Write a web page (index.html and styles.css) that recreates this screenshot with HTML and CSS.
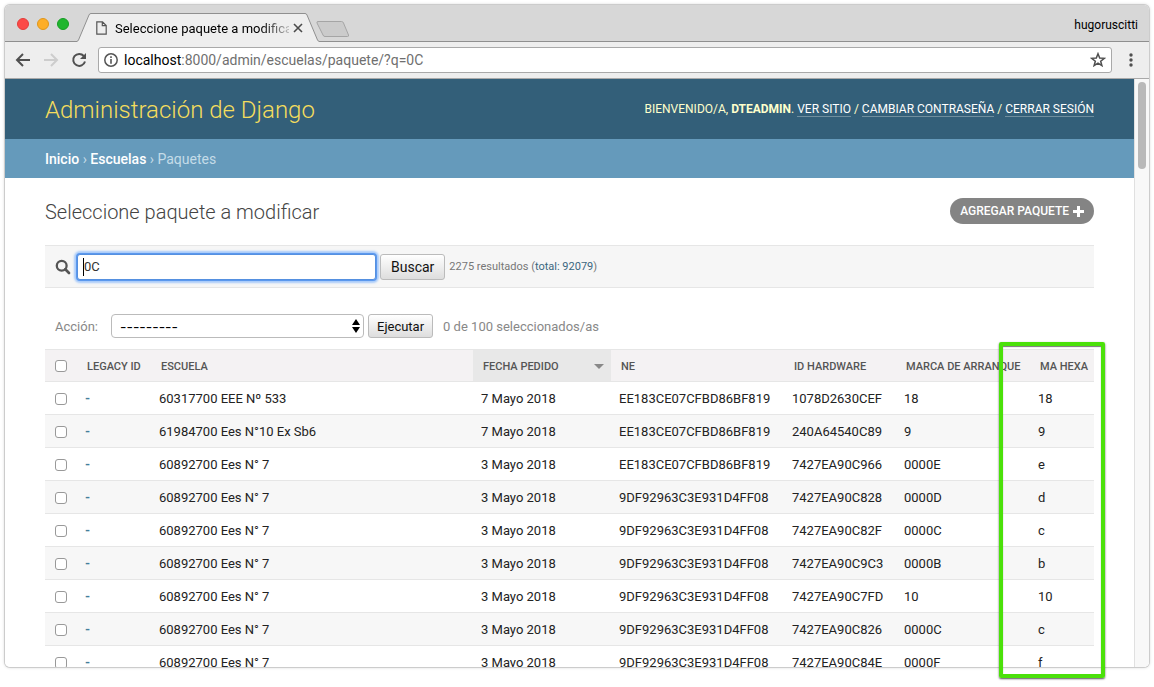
FILE: index.html
```html
<!DOCTYPE html>
<html lang="es">
<head>
<meta charset="utf-8">
<title>Seleccione paquete a modificar</title>
<link rel="stylesheet" href="styles.css">
</head>
<body>
<div class="window">
  <div class="tabstrip">
    <div class="lights"><i class="light close"></i><i class="light min"></i><i class="light max"></i></div>
    <div class="tab">
      <svg class="slope" width="14" height="29" viewBox="0 0 14 29"><path d="M0 29V28L1 28 12 2Q13 .5 14 .5V29Z" fill="#eee"/><path d="M0 28.500Q1 28 1.500 27L12 2Q12.500 .5 14 .5" fill="none" stroke="#8f8f8f"/></svg>
      <div class="tab-body">
        <svg width="11" height="14" viewBox="0 0 11 14" fill="none" stroke="#555" stroke-width="1.200"><path d="M.8.800H6.500L10.200 4.500V13.200H.8ZM6.300 1V4.700H10"/></svg>
        <span class="tab-title">Seleccione paquete a modificar</span>
        <button class="tab-close" type="button" aria-label="Cerrar pestaña"><svg width="10" height="10" viewBox="0 0 10 10" stroke="#4a4a4a" stroke-width="1.600"><path d="M1 1 9 9M9 1 1 9"/></svg></button>
      </div>
      <svg class="slope" width="14" height="29" viewBox="0 0 14 29"><path d="M0 .5Q1 .5 2 2L13 28H14V29H0Z" fill="#eee"/><path d="M0 .5Q1.500 .5 2 2L12.500 27Q13 28 14 28.500" fill="none" stroke="#8f8f8f"/></svg>
    </div>
    <button class="new-tab" type="button" aria-label="Nueva pestaña"><svg width="34" height="18" viewBox="0 0 34 18"><path d="M2 1.500H25.500Q27 1.500 27.500 3L32.500 15Q33 16.500 31.500 16.500H9Q7.500 16.500 7 15L1 3Q.5 1.500 2 1.500Z" fill="#cbcbcb" stroke="#a5a5a5"/></svg></button>
    <span class="profile">hugoruscitti</span>
  </div>
  <div class="toolbar">
    <button class="nav" type="button" aria-label="Atrás"><svg width="16" height="14" viewBox="0 0 16 14" fill="none" stroke="#505050" stroke-width="2"><path d="M15 7H2M8 1 2 7 8 13"/></svg></button>
    <button class="nav" type="button" aria-label="Adelante" disabled><svg width="16" height="14" viewBox="0 0 16 14" fill="none" stroke="#cdcdcd" stroke-width="2"><path d="M1 7H14M8 1 14 7 8 13"/></svg></button>
    <button class="nav" type="button" aria-label="Recargar"><svg width="16" height="16" viewBox="0 0 16 16"><path d="M12.800 4A6 6 0 1 0 14 9.500" fill="none" stroke="#505050" stroke-width="2"/><path d="M15 1V7H9Z" fill="#505050"/></svg></button>
    <div class="omnibox">
      <svg width="14" height="14" viewBox="0 0 14 14"><circle cx="7" cy="7" r="6.200" fill="none" stroke="#555" stroke-width="1.500"/><path d="M6.200 3.300H7.800V5H6.200ZM6.200 6H7.800V10.700H6.200Z" fill="#555"/></svg>
      <span class="url"><b>localhost</b>:8000/admin/escuelas/paquete/?q=0C</span>
      <button class="star" type="button" aria-label="Añadir a marcadores"><svg width="16" height="16" viewBox="0 0 16 16"><path d="M8 1.700 9.700 6 14.300 6.300 10.700 9.200 11.900 13.700 8 11.200 4.100 13.700 5.300 9.200 1.700 6.300 6.300 6Z" fill="none" stroke="#505050" stroke-width="1.500"/></svg></button>
    </div>
    <button class="menu" type="button" aria-label="Menú"><svg width="4" height="14" viewBox="0 0 4 14" fill="#505050"><circle cx="2" cy="2" r="1.700"/><circle cx="2" cy="7" r="1.700"/><circle cx="2" cy="12" r="1.700"/></svg></button>
  </div>
  <div class="viewport">
    <div class="page">
      <header class="header">
        <h1>Administración de Django</h1>
        <div class="user-tools">Bienvenido/a, <strong>dteadmin</strong>. <a href="#">Ver sitio</a> / <a href="#">Cambiar contraseña</a> / <a href="#">Cerrar sesión</a></div>
      </header>
      <nav class="breadcrumbs"><a href="#">Inicio</a> › <a href="#">Escuelas</a> › Paquetes</nav>
      <main class="content">
        <div class="heading">
          <h2>Seleccione paquete a modificar</h2>
          <a class="add" href="#">Agregar paquete <svg width="11" height="11" viewBox="0 0 11 11" fill="#fff"><path d="M4 0H7V4H11V7H7V11H4V7H0V4H4Z"/></svg></a>
        </div>
        <form class="search">
          <label for="q" aria-label="Buscar"><svg width="16" height="16" viewBox="0 0 16 16" fill="none" stroke="#555"><circle cx="6.700" cy="6.700" r="4.900" stroke-width="2.300"/><path d="M10.300 10.300 14 14" stroke-width="2.700" stroke-linecap="round"/></svg></label>
          <span class="field"><input id="q" type="text" value="0C"><i class="caret"></i></span>
          <button class="btn btn-search" type="button">Buscar</button>
          <span class="count">2275 resultados (<a href="#">total: 92079</a>)</span>
        </form>
        <form class="actions">
          <label for="action">Acción:</label>
          <span class="select"><select id="action"><option>---------</option></select><svg width="8" height="14" viewBox="0 0 8 14"><path d="M4 0 8 6H0ZM0 8H8L4 14Z"/></svg></span>
          <button class="btn" type="button">Ejecutar</button>
          <span class="selected">0 de 100 seleccionados/as</span>
        </form>
        <table class="results">
          <colgroup><col class="c-check"><col class="c-legacy"><col><col class="c-date"><col class="c-ne"><col class="c-hw"><col class="c-mark"><col class="c-hexa"></colgroup>
          <thead><tr><th><input type="checkbox" aria-label="Seleccionar todo"></th><th>Legacy id</th><th>Escuela</th><th class="sorted"><span>Fecha pedido<svg width="10" height="5" viewBox="0 0 10 5"><path d="M0 0H10L5 5Z" fill="#888"/></svg></span></th><th>Ne</th><th>Id hardware</th><th>Marca de arranque</th><th>Ma hexa</th></tr></thead>
          <tbody>
            <tr><td><input type="checkbox" aria-label="Seleccionar fila 1"></td><td><a href="#">-</a></td><td>60317700 EEE Nº 533</td><td>7 Mayo 2018</td><td>EE183CE07CFBD86BF819</td><td>1078D2630CEF</td><td>18</td><td>18</td></tr>
            <tr><td><input type="checkbox" aria-label="Seleccionar fila 2"></td><td><a href="#">-</a></td><td>61984700 Ees N°10 Ex Sb6</td><td>7 Mayo 2018</td><td>EE183CE07CFBD86BF819</td><td>240A64540C89</td><td>9</td><td>9</td></tr>
            <tr><td><input type="checkbox" aria-label="Seleccionar fila 3"></td><td><a href="#">-</a></td><td>60892700 Ees N° 7</td><td>3 Mayo 2018</td><td>EE183CE07CFBD86BF819</td><td>7427EA90C966</td><td>0000E</td><td>e</td></tr>
            <tr><td><input type="checkbox" aria-label="Seleccionar fila 4"></td><td><a href="#">-</a></td><td>60892700 Ees N° 7</td><td>3 Mayo 2018</td><td>9DF92963C3E931D4FF08</td><td>7427EA90C828</td><td>0000D</td><td>d</td></tr>
            <tr><td><input type="checkbox" aria-label="Seleccionar fila 5"></td><td><a href="#">-</a></td><td>60892700 Ees N° 7</td><td>3 Mayo 2018</td><td>9DF92963C3E931D4FF08</td><td>7427EA90C82F</td><td>0000C</td><td>c</td></tr>
            <tr><td><input type="checkbox" aria-label="Seleccionar fila 6"></td><td><a href="#">-</a></td><td>60892700 Ees N° 7</td><td>3 Mayo 2018</td><td>9DF92963C3E931D4FF08</td><td>7427EA90C9C3</td><td>0000B</td><td>b</td></tr>
            <tr><td><input type="checkbox" aria-label="Seleccionar fila 7"></td><td><a href="#">-</a></td><td>60892700 Ees N° 7</td><td>3 Mayo 2018</td><td>9DF92963C3E931D4FF08</td><td>7427EA90C7FD</td><td>10</td><td>10</td></tr>
            <tr><td><input type="checkbox" aria-label="Seleccionar fila 8"></td><td><a href="#">-</a></td><td>60892700 Ees N° 7</td><td>3 Mayo 2018</td><td>9DF92963C3E931D4FF08</td><td>7427EA90C826</td><td>0000C</td><td>c</td></tr>
            <tr><td><input type="checkbox" aria-label="Seleccionar fila 9"></td><td><a href="#">-</a></td><td>60892700 Ees N° 7</td><td>3 Mayo 2018</td><td>9DF92963C3E931D4FF08</td><td>7427EA90C84E</td><td>0000F</td><td>f</td></tr>
          </tbody>
        </table>
      </main>
    </div>
    <div class="scrollbar"><div class="thumb"></div></div>
  </div>
</div>
<div class="highlight"></div>
</body>
</html>
```

FILE: styles.css
```css
* { box-sizing: border-box; }
body {
  margin: 0;
  height: 100vh;
  padding: 5px 5px 20px;
  position: relative;
  overflow: hidden;
  background: #fff;
  font-family: Roboto, "Liberation Sans", sans-serif;
  font-size: 13px;
  color: #222;
}
button { font-family: inherit; cursor: pointer; }
svg { display: block; flex: none; }
h1, h2 { margin: 0; font-weight: 300; }
a { text-decoration: none; }

.window {
  height: 100%;
  display: flex;
  flex-direction: column;
  overflow: hidden;
  border-radius: 5px;
  box-shadow: 0 0 0 1px #ccc, 0 0 3px 1px #ddd;
}

/* browser chrome */
.tabstrip {
  flex: none;
  display: flex;
  align-items: flex-end;
  height: 37px;
  background: #d7d7d7;
  box-shadow: inset 0 -1px #8f8f8f;
}
.lights { display: flex; gap: 8px; align-self: center; padding-left: 12px; width: 72px; }
.light { width: 12px; height: 12px; border-radius: 50%; }
.close { background: #fc4a47; border: 1px solid #e33e3b; }
.min { background: #fdae27; border: 1px solid #e0961b; }
.max { background: #20b62f; border: 1px solid #169e24; }
.tab { display: flex; width: 242px; height: 29px; }
.tab-body {
  flex: 1;
  min-width: 0;
  display: flex;
  align-items: center;
  padding: 0 2px 0 5px;
  background: #eee;
  border-top: 1px solid #8f8f8f;
}
.tab-title {
  flex: 1;
  min-width: 0;
  margin: 0 4px 0 8px;
  overflow: hidden;
  white-space: nowrap;
  font-size: 13px;
  color: #000;
  -webkit-mask-image: linear-gradient(to right, #000 84%, rgba(0, 0, 0, 0.2));
  mask-image: linear-gradient(to right, #000 84%, rgba(0, 0, 0, 0.2));
}
.tab-close, .new-tab, .nav, .star, .menu { padding: 0; border: 0; background: none; }
.new-tab { padding-bottom: 4px; margin-left: -3px; }
.profile { margin: 0 11px 0 auto; align-self: center; padding-top: 2px; font-size: 12px; color: #000; }
.toolbar {
  flex: none;
  display: flex;
  align-items: center;
  height: 37px;
  padding: 0 16px 0 10px;
  background: #eee;
  border-bottom: 1px solid #a9a9a9;
}
.nav { width: 28px; }
.omnibox {
  flex: 1;
  display: flex;
  align-items: center;
  height: 26px;
  margin: 0 17px 0 -1px;
  padding: 0 5px;
  background: #fff;
  border: 1px solid #a9a9a9;
  border-radius: 3px;
}
.url { flex: 1; margin-left: 6px; font-size: 14px; line-height: 20px; color: #6f6f6f; }
.url b { font-weight: 400; color: #000; }

/* page area */
.viewport { flex: 1; min-height: 0; display: flex; background: #fff; }
.page { flex: 1; min-width: 0; overflow: hidden; }
.scrollbar { width: 15px; padding: 3px 3px 0; background: #f8f8f8; border-left: 1px solid #e0e0e0; }
.thumb { height: 87px; border-radius: 4px; background: #b9b9b9; }
.header {
  display: flex;
  align-items: center;
  justify-content: space-between;
  height: 60px;
  padding: 0 40px;
  background: #335f79;
  color: #ffc;
}
.header h1 { padding-top: 2px; font-size: 24px; line-height: 30px; color: #f5dd5d; }
.user-tools { font-size: 12px; line-height: 14px; text-transform: uppercase; }
.user-tools a { color: #fff; border-bottom: 1px solid #708f9f; }
.breadcrumbs { height: 39px; padding: 0 40px; font-size: 14px; line-height: 40px; color: #c4dce8; background: #659abb; }
.breadcrumbs a { color: #fff; font-weight: 500; }
.content { padding: 20px 40px; }
.heading { display: flex; align-items: center; justify-content: space-between; height: 26px; margin-bottom: 21px; }
.heading h2 { padding-top: 2px; font-size: 20px; line-height: 26px; color: #444; }
.add {
  display: flex;
  align-items: center;
  gap: 4px;
  height: 26px;
  padding: 0 10px;
  border-radius: 13px;
  background: #848484;
  color: #fff;
  font-size: 12px;
  font-weight: 500;
  text-transform: uppercase;
}
.search {
  display: flex;
  align-items: center;
  height: 43px;
  padding-left: 10px;
  background: #f6f6f6;
  border: solid #e6e6e6;
  border-width: 1px 0;
}
.field { position: relative; margin: 0 4px 0 6px; }
.field input {
  display: block;
  width: 299px;
  height: 26px;
  padding: 2px 6px;
  border: 1px solid #5590e0;
  border-radius: 3px;
  outline: 0;
  box-shadow: 0 0 0 1px #5b98ee, 0 0 2px 3px #a8cbfa;
  font: 13px Roboto, sans-serif;
  color: #333;
}
.caret { position: absolute; left: 6px; top: 4px; width: 1px; height: 18px; background: #000; }
.btn {
  height: 24px;
  padding: 0 8px;
  border: 1px solid #bbb;
  border-radius: 3px;
  background: linear-gradient(#fff, #ddd);
  font-size: 13px;
  color: #111;
}
.btn-search { height: 26px; padding: 0 10px; font-size: 14px; }
.count { margin-left: 4px; font-size: 11px; color: #777; }
.count a { color: #3b6680; }
.actions { display: flex; align-items: center; height: 24px; margin: 26px 0 11px; padding-left: 10px; color: #888; }
.actions label { width: 56px; }
.select { position: relative; margin-right: 4px; }
.select select {
  display: block;
  appearance: none;
  width: 253px;
  height: 24px;
  padding: 0 8px;
  border: 1px solid #bbb;
  border-radius: 4px;
  background: #fff;
  color: #000;
  font: 14px Inter, sans-serif;
}
.select svg { position: absolute; right: 4px; top: 5px; pointer-events: none; }
.selected { margin-left: 10px; }

.results { width: 100%; table-layout: fixed; border-collapse: separate; border-spacing: 0; }
.c-check { width: 32px; }
.c-legacy { width: 74px; }
.c-date { width: 138px; }
.c-ne { width: 173px; }
.c-hw { width: 112px; }
.c-mark { width: 134px; }
.c-hexa { width: 64px; }
.results th, .results td { height: 33px; text-align: left; white-space: nowrap; border-bottom: 1px solid #e6e6e6; }
.results th {
  padding: 2px 10px 0;
  border-top: 1px solid #e6e6e6;
  background: #f4f2f3;
  color: #555;
  font-size: 11px;
  font-weight: 500;
  text-transform: uppercase;
}
.results td { padding: 2px 8px 0; line-height: 16px; }
.results td a { color: #447e9b; font-weight: 700; }
.results td:first-child { padding: 2px 0 0 10px; }
.results th:first-child { padding: 0 0 0 10px; }
.results tr:nth-child(even) td { background: #f7f7f7; }
.results .sorted { padding-right: 7px; background: #e8e8e8; }
.sorted span { display: flex; justify-content: space-between; align-items: center; }
.results input {
  display: block;
  appearance: none;
  width: 12px;
  height: 12px;
  margin: 0;
  border: 1px solid #999;
  border-radius: 3px;
  background: #fff;
}

/* marker drawn over the last column */
.highlight {
  position: absolute;
  top: 342px;
  right: 49px;
  bottom: 9px;
  width: 106px;
  border: 4px solid #4be10a;
  border-radius: 2px;
  box-shadow: 0 1px 2px #555, inset 0 1px 1px #777;
}
```
